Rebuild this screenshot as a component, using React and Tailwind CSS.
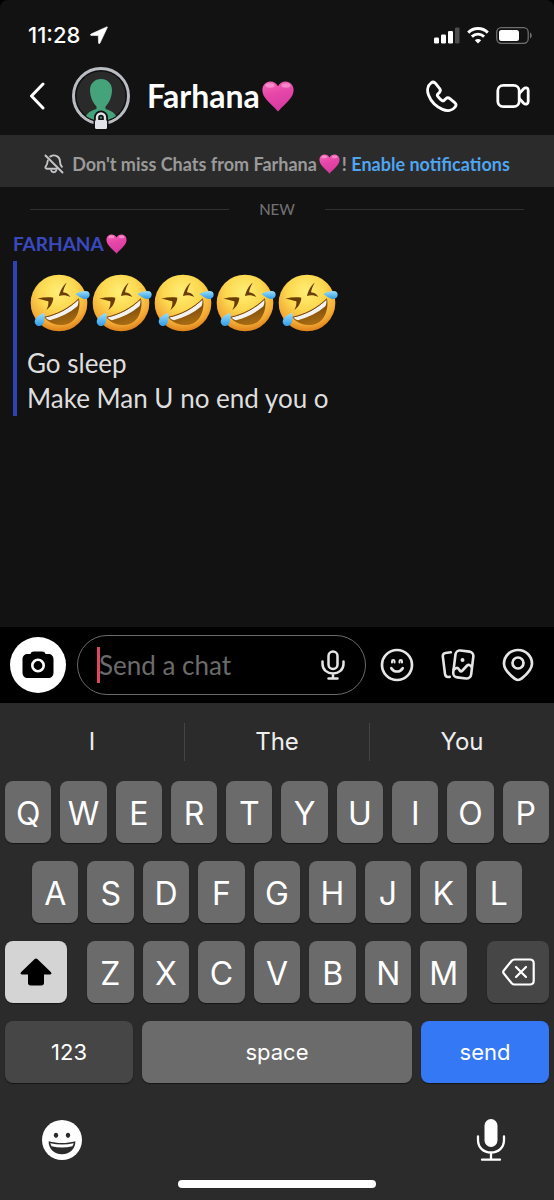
import React from 'react';

const rows = {
  top: ['Q', 'W', 'E', 'R', 'T', 'Y', 'U', 'I', 'O', 'P'],
  home: ['A', 'S', 'D', 'F', 'G', 'H', 'J', 'K', 'L'],
  bottom: ['Z', 'X', 'C', 'V', 'B', 'N', 'M'],
};

const suggestions = ['I', 'The', 'You'];

/* Gradients shared by the emoji drawings */
const EmojiDefs = () => (
  <svg className="absolute h-0 w-0" aria-hidden="true">
    <defs>
      <linearGradient id="heart-pink" x1="0" y1="0" x2="0.3" y2="1">
        <stop offset="0" stopColor="#f767b8" />
        <stop offset="0.5" stopColor="#e546a8" />
        <stop offset="1" stopColor="#d93aa0" />
      </linearGradient>
      <radialGradient id="face-yellow" cx="0.48" cy="0.3" r="0.72">
        <stop offset="0" stopColor="#ffee76" />
        <stop offset="0.45" stopColor="#fcd84f" />
        <stop offset="0.8" stopColor="#f3a935" />
        <stop offset="1" stopColor="#d97a16" />
      </radialGradient>
      <linearGradient id="mouth-brown" x1="0" y1="0" x2="0.3" y2="1">
        <stop offset="0" stopColor="#5c3206" />
        <stop offset="1" stopColor="#a56a12" />
      </linearGradient>
      <linearGradient id="tear-blue" x1="0" y1="0" x2="0" y2="1">
        <stop offset="0" stopColor="#9be0fb" />
        <stop offset="1" stopColor="#2f9be6" />
      </linearGradient>
    </defs>
  </svg>
);

const Heart = ({ className }) => (
  <svg viewBox="0 0 32 31" className={className} role="img" aria-label="🩷">
    <path
      d="M16 30.5C14.5 28.6 11.2 25.3 7.4 21.7 2.6 17.1.4 13.2.4 9 .4 4.300 3.900.6 8.300.6c3.300 0 6.200 1.900 7.700 4.700C17.500 2.500 20.400.6 23.700.6c4.400 0 7.900 3.700 7.900 8.400 0 4.200-2.200 8.100-7 12.700-3.800 3.600-7.100 6.900-8.600 8.800z"
      fill="url(#heart-pink)"
    />
    <ellipse cx="8" cy="4.500" rx="4.500" ry="2.200" fill="#ffb3de" opacity=".55" />
    <ellipse cx="24" cy="4.500" rx="4.500" ry="2.200" fill="#ffb3de" opacity=".55" />
  </svg>
);

const Rofl = () => (
  <svg viewBox="0 0 186 174" className="h-[58px] w-[62px]" role="img" aria-label="🤣">
    <circle cx="90" cy="87" r="85" fill="url(#face-yellow)" />
    {/* eyes */}
    <path d="M113 26C102 34 93 50 90 66c12-4 23-2 34 3-5-9-12-13-22-14 2-11 6-20 11-29z" fill="#6b3d06" />
    <path d="M25 74c14 2 23 5 33 8 1 9-1 17-6 26 11-8 20-21 21-37-16-2-32-1-48 3z" fill="#6b3d06" />
    {/* mouth */}
    <path d="M46 130c40-9 74-27 104-56 4 20 0 45-15 63-14 16-40 20-62 12-12-4-21-11-27-19z" fill="url(#mouth-brown)" />
    <path d="M49 130c40-9 72-27 99-53 1 8 0 14-3 20-24 20-51 34-82 42-6-2-11-5-14-9z" fill="#f4f2f0" />
    <path d="M46 130c40-9 74-27 104-56" fill="none" stroke="#7a4508" strokeWidth="3" />
    {/* tears */}
    <path d="M139 60c9-6 21-9 31-9 8 0 12 5 12 11 0 8-7 14-15 13-11-1-19-9-28-15z" fill="url(#tear-blue)" />
    <path d="M46 117c-12 3-23 10-27 19-4 8-1 16 6 19 7 3 15 0 18-7 4-10 5-20 3-31z" fill="url(#tear-blue)" />
  </svg>
);

const StatusBar = () => (
  <div className="flex h-[62px] items-center justify-between pt-2 pr-[22px] pl-7 font-['Inter',sans-serif] text-white">
    <div className="flex items-center gap-[10px]">
      <span className="text-[22px] leading-6 font-medium">11:28</span>
      <svg viewBox="0 0 18 18" className="h-[18px] w-[18px]" aria-hidden="true">
        <path d="M16.600.900 1 8c-.9.500-.6 1.500.3 1.500l7 .1.200 7.200c0 1 1.100 1.200 1.500.3L17.300 1.600c.3-.6-.2-.9-.7-.7z" fill="currentColor" stroke="currentColor" strokeWidth=".6" />
      </svg>
    </div>
    <div className="flex items-center gap-[7px]">
      <svg viewBox="0 0 26 17" className="h-[17px] w-[26px]" aria-hidden="true" fill="currentColor">
        <rect x="0" y="10.500" width="5" height="6" rx="1.300" />
        <rect x="7" y="7.500" width="5" height="9" rx="1.300" />
        <rect x="14" y="4" width="5" height="12.500" rx="1.300" />
        <rect x="21" y=".5" width="4.500" height="16" rx="1.300" opacity=".25" />
      </svg>
      <svg viewBox="0 0 22 17" className="h-[17px] w-[22px]" aria-hidden="true" fill="none" stroke="currentColor" strokeWidth="2.900">
        <path d="M1.200 5.600c5.500-5.400 14.100-5.400 19.600 0" />
        <path d="M4.900 9.600c3.500-3.300 8.700-3.300 12.200 0" />
        <path d="M11 16.500l-3.200-3.200c1.800-1.700 4.600-1.700 6.400 0z" fill="currentColor" stroke="none" />
      </svg>
      <svg viewBox="0 0 36 17" className="h-[17px] w-9" aria-hidden="true">
        <rect x=".7" y=".7" width="31.500" height="15.600" rx="4.500" fill="none" stroke="#6e6e6e" strokeWidth="1.300" />
        <rect x="3" y="3" width="20" height="11" rx="2.500" fill="#fff" />
        <path d="M34 5.500c2.300.8 2.300 5.200 0 6z" fill="#6e6e6e" />
      </svg>
    </div>
  </div>
);

const ChatHeader = () => (
  <header className="mb-[5px] flex h-[68px] items-center pr-6 pl-[29px] text-white">
    <button type="button" aria-label="Back" className="mr-[27px]">
      <svg viewBox="0 0 16 28" className="h-7 w-4" fill="none" stroke="currentColor" strokeWidth="3" strokeLinecap="round" strokeLinejoin="round">
        <path d="M14 2 2.500 14 14 26" />
      </svg>
    </button>
    <button type="button" aria-label="Profile" className="relative mr-[17px] h-[58px] w-[58px] shrink-0">
      <svg viewBox="0 0 58 64" className="h-16 w-[58px]">
        <circle cx="29" cy="29" r="27.500" fill="#111" stroke="#b9bcc2" strokeWidth="3" />
        <circle cx="29" cy="29" r="24.500" fill="#2a2a2b" />
        <path d="M29 12c-6.500 0-11 4.700-11 11 0 7.500 3.500 13.500 6.500 16.500V42c-4 1.200-8.500 3-10.500 7 8 6 22 6 30 0-2-4-6.500-5.800-10.500-7v-2.500c3-3 6.500-9 6.500-16.500 0-6.300-4.500-11-11-11z" fill="#44a37b" />
        <g stroke="#111" strokeWidth="3" fill="#111">
          <path d="M25 54v-3.500a4 4 0 0 1 8 0V54" strokeWidth="6" fill="none" />
          <rect x="23" y="53" width="12" height="9" rx="2" />
        </g>
        <path d="M25 54v-3.500a4 4 0 0 1 8 0V54" fill="none" stroke="#e2e4ea" strokeWidth="2.400" />
        <rect x="23" y="53" width="12" height="9" rx="1.500" fill="#e2e4ea" />
      </svg>
    </button>
    <h1 className="flex items-center gap-[2px] text-[32px] leading-9 font-bold">
      Farhana
      <Heart className="h-[31px] w-8" />
    </h1>
    <div className="ml-auto flex items-center gap-[38px]">
      <button type="button" aria-label="Call">
        <svg viewBox="0 0 32 32" className="h-8 w-8" fill="none" stroke="currentColor" strokeWidth="2.900" strokeLinejoin="round">
          <path d="M5.200 2.900c1.300-1 3.200-.8 4.300.5l4 4.900c1 1.200.9 3-.1 4.100l-1.500 1.600c-.6.700-.7 1.700-.1 2.400 1.100 1.500 2.500 2.900 4 4 .7.600 1.700.5 2.400-.1l1.600-1.500c1.200-1.100 2.900-1.100 4.100-.1l4.800 3.900c1.300 1.100 1.500 3 .5 4.300-2.800 3.700-7.900 4.600-12.700 2.500C9.900 26.500 5 21.500 2.600 15.300.800 10.700 1.500 5.700 5.200 2.900z" />
        </svg>
      </button>
      <button type="button" aria-label="Video call">
        <svg viewBox="0 0 34 26" className="h-[26px] w-[34px]" fill="none" stroke="currentColor" strokeWidth="2.800" strokeLinejoin="round">
          <rect x="1.800" y="2.300" width="21.400" height="21.400" rx="5.500" />
          <path d="M23.200 10.500l4.500-4.800c1.700-1.700 4.500-.8 4.500 1.500v11.600c0 2.300-2.800 3.200-4.500 1.500l-4.500-4.800" />
        </svg>
      </button>
    </div>
  </header>
);

const NotificationBanner = () => (
  <div className="flex h-[52px] items-center justify-center bg-[#2b2b2b] pt-[6px] text-[18px] leading-6 font-bold text-[#9a9a9a]">
    <svg viewBox="0 0 20 20" className="mr-2 h-5 w-5 shrink-0" fill="none" stroke="#c4c4c6" strokeWidth="1.900" strokeLinecap="round" strokeLinejoin="round" aria-hidden="true">
      <path d="M1.500 1.500l17 17" />
      <path d="M6.200 2.600C10.500-.2 16 2.400 16 7.400c0 2.800.9 4.200 1.900 5.400" />
      <path d="M3.800 6.500c-.3 3.100-.8 4.300-2 5.800-.8 1-.3 2.500 1 2.500H13" />
      <path d="M7.200 16.500c.8 2.300 4.300 2.300 5 0" />
    </svg>
    <p className="flex items-center whitespace-pre">
      Don't miss Chats from Farhana
      <Heart className="mx-[2px] h-5 w-[21px]" />!{' '}
      <a href="#notifications" className="text-[#4fa5f0]">Enable notifications</a>
    </p>
  </div>
);

const Messages = () => (
  <main className="flex-1">
    <div className="flex h-11 items-center gap-[30px] px-[30px]">
      <span className="h-px flex-1 bg-[#303030]" />
      <span className="text-[15px] leading-5 font-medium text-[#707070]">NEW</span>
      <span className="h-px flex-1 bg-[#303030]" />
    </div>
    <section className="pl-[13px]">
      <h2 className="flex h-[26px] items-center gap-[2px] text-[19px] leading-6 font-bold text-[#3a49c0]">
        FARHANA
        <Heart className="h-5 w-[21px]" />
      </h2>
      <div className="mt-1 border-l-4 border-[#2d43b5] pt-[13px] pl-[10px] text-[26px] leading-[35px] text-[#dedede]">
        <div className="mb-[14px] ml-[2px] flex">
          {[0, 1, 2, 3, 4].map((i) => (
            <Rofl key={i} />
          ))}
        </div>
        <p>Go sleep</p>
        <p>Make Man U no end you o</p>
      </div>
    </section>
  </main>
);

const Composer = () => (
  <div className="flex h-[76px] items-center bg-black pr-5 pl-[10px] text-[#e6e6e6]">
    <button type="button" aria-label="Camera" className="mr-[11px] flex h-14 w-14 shrink-0 items-center justify-center rounded-full bg-white">
      <svg viewBox="0 0 32 28" className="h-7 w-8">
        <path d="M8.500 3C9 1.300 10 .5 12 .5h8c2 0 3 .8 3.500 2.500H26c3.500 0 5.500 2 5.500 5.500v13c0 3.500-2 5.500-5.500 5.500H6c-3.500 0-5.500-2-5.500-5.500v-13C.5 5 2.500 3 6 3z" fill="#000" />
        <circle cx="16" cy="14.500" r="5.700" fill="none" stroke="#fff" strokeWidth="2.600" />
      </svg>
    </button>
    <div className="relative mr-[14px] flex h-[60px] min-w-0 flex-1 items-center rounded-full border border-[#6a6a6a] pr-5 pl-[21px]">
      <input
        type="text"
        aria-label="Send a chat"
        placeholder="Send a chat"
        className="w-full min-w-0 bg-transparent text-[26px] leading-8 outline-none placeholder:text-[#6b6b6b]"
      />
      <span className="absolute left-[19px] h-9 w-[3px] bg-[#e0475f]" />
      <button type="button" aria-label="Voice note" className="shrink-0">
        <svg viewBox="0 0 24 30" className="h-[30px] w-6" fill="none" stroke="currentColor" strokeWidth="2.500" strokeLinecap="round">
          <rect x="7.500" y="1.500" width="9" height="17.500" rx="4.500" />
          <path d="M1.500 11.500v2.500c0 5.800 4.700 9.500 10.500 9.500s10.500-3.700 10.500-9.500v-2.500M12 24v4.500M7.500 28.500h9" />
        </svg>
      </button>
    </div>
    <div className="flex shrink-0 items-center gap-[27px]">
      <button type="button" aria-label="Stickers">
        <svg viewBox="0 0 34 34" className="h-[34px] w-[34px]" fill="none" stroke="currentColor" strokeWidth="2.700" strokeLinecap="round">
          <circle cx="17" cy="17" r="15" />
          <path d="M12 14.500v-1.200c0-1.700 2.500-1.700 2.500 0v1.200M19.500 14.500v-1.200c0-1.700 2.500-1.700 2.500 0v1.200" strokeWidth="2" />
          <path d="M11.300 20.200c2.800 4.400 8.600 4.400 11.400 0" />
        </svg>
      </button>
      <button type="button" aria-label="Memories">
        <svg viewBox="0 0 34 32" className="h-8 w-[34px]" fill="none" stroke="currentColor" strokeWidth="2.600" strokeLinecap="round" strokeLinejoin="round">
          <path d="M9.800 3.300l-5.300.7c-1.800.2-2.900 1.500-2.700 3.300l2.200 17.500c.3 2.100 1.800 3.400 3.700 3.200l1-.1" />
          <rect x="13.300" y="2" width="18" height="27" rx="4.500" transform="rotate(7 22.300 15.500)" />
          <path d="M12.600 20.500l2.600-1.400c1-.5 1.700-.2 2.300.7l1.600 2.100c.5.700 1.300.7 1.900.1l5.100-5.500c.9-.9 2-.9 2.900-.1l1.500 1.300" />
          <circle cx="21.500" cy="11" r="1.200" fill="currentColor" strokeWidth="1.600" />
        </svg>
      </button>
      <button type="button" aria-label="Location">
        <svg viewBox="0 0 32 34" className="h-[34px] w-8" fill="none" stroke="currentColor" strokeWidth="2.700" strokeLinejoin="round">
          <path d="M16 32c-1.300 0-2.500-.5-3.500-1.400C6.500 25.800 2 21.500 2 15.700 2 7.900 8.200 2 16 2s14 5.900 14 13.700c0 5.800-4.500 10.100-10.500 14.900-1 .9-2.200 1.400-3.500 1.400z" />
          <circle cx="16" cy="15" r="5.500" />
        </svg>
      </button>
    </div>
  </div>
);

const Key = ({ children, className = 'min-w-0 flex-1 bg-[#6b6b6b] pt-1 text-[32px] text-white', ...rest }) => (
  <button type="button" className={`flex h-[62px] items-center justify-center rounded-lg shadow-[0_1px_1px_#161616] ${className}`} {...rest}>
    {children}
  </button>
);

const Keyboard = () => (
  <div className="bg-[#2b2b2b] pb-3 font-['Inter',sans-serif] text-white">
    <div className="flex h-[78px] items-center divide-x divide-[#444]">
      {suggestions.map((word) => (
        <button type="button" key={word} className="h-[38px] flex-1 text-[24px] leading-[38px] text-[#eee]">
          {word}
        </button>
      ))}
    </div>

    <div className="flex flex-col gap-[18px] px-[5px]">
      <div className="flex gap-[9px]">
        {rows.top.map((k) => <Key key={k}>{k}</Key>)}
      </div>
      <div className="flex gap-[9px] px-[27px]">
        {rows.home.map((k) => <Key key={k}>{k}</Key>)}
      </div>
      <div className="flex gap-5">
        <Key aria-label="Shift" className="w-[62px] bg-[#d4d4d4] text-black">
          <svg viewBox="0 0 32 28" className="h-7 w-8" fill="currentColor">
            <path d="M14.700 1c.8-.8 1.800-.8 2.600 0L30.800 14c1.200 1.200.7 2.500-.9 2.500H24V25c0 1.600-.9 2.500-2.500 2.500h-11C8.900 27.500 8 26.600 8 25v-8.500H2.100c-1.600 0-2.100-1.300-.9-2.500z" />
          </svg>
        </Key>
        <div className="flex flex-1 gap-[9px]">
          {rows.bottom.map((k) => <Key key={k}>{k}</Key>)}
        </div>
        <Key aria-label="Delete" className="w-[62px] bg-[#464646] text-white">
          <svg viewBox="0 0 33 28" className="h-7 w-[33px]" fill="none" stroke="currentColor" strokeWidth="2.200" strokeLinecap="round" strokeLinejoin="round">
            <path d="M12.500 1.500H28c2.500 0 3.700 1.200 3.700 3.700v17.600c0 2.500-1.200 3.700-3.700 3.700H12.500c-1.200 0-2-.4-2.800-1.200L2 15.800c-1.200-1.300-1.200-2.300 0-3.600l7.700-9.500c.8-.8 1.600-1.200 2.800-1.200z" />
            <path d="M14 9l10 10M24 9L14 19" />
          </svg>
        </Key>
      </div>
      <div className="flex gap-[9px]">
        <Key className="w-32 bg-[#464646] text-[22px] text-white">123</Key>
        <Key className="flex-1 bg-[#6b6b6b] text-[22px] text-white">space</Key>
        <Key className="w-32 bg-[#3478f6] text-[22px] text-white">send</Key>
      </div>
    </div>

    <div className="mt-9 flex items-center justify-between pr-[48px] pl-[42px]">
      <button type="button" aria-label="Emoji">
        <svg viewBox="0 0 120 120" className="h-10 w-10">
          <circle cx="60" cy="60" r="60" fill="#fff" />
          <ellipse cx="42" cy="46" rx="6.500" ry="8" fill="#2b2b2b" />
          <ellipse cx="78" cy="46" rx="6.500" ry="8" fill="#2b2b2b" />
          <path d="M20 64c26 7 54 7 80 0 1 22-16 39-40 39S19 86 20 64z" fill="#2b2b2b" />
          <path d="M25 70c23 5 47 5 70 0-1 4-2 6-4 9-20 5-42 5-62 0-2-3-3-5-4-9z" fill="#fff" />
        </svg>
      </button>
      <button type="button" aria-label="Dictate">
        <svg viewBox="0 0 30 42" className="h-[42px] w-[30px]" fill="none" stroke="currentColor" strokeWidth="2.300" strokeLinecap="round">
          <rect x="8.500" y="0" width="13" height="28" rx="6.500" fill="currentColor" stroke="none" />
          <path d="M2 17.500V21c0 7.500 5.500 12.500 13 12.500S28 28.500 28 21v-3.500M15 34v6.500M6 40.700h18" />
        </svg>
      </button>
    </div>

    <div className="mx-auto mt-[19px] h-2 w-[198px] rounded-full bg-white" />
  </div>
);

const App = () => {
  return (
    <div className="bg-black">
      <div className="flex min-h-screen flex-col overflow-hidden rounded-t-lg bg-[#121212] font-['Lato',sans-serif]">
        <EmojiDefs />
        <StatusBar />
        <ChatHeader />
        <NotificationBanner />
        <Messages />
        <Composer />
        <Keyboard />
      </div>
    </div>
  );
};

export default App;
